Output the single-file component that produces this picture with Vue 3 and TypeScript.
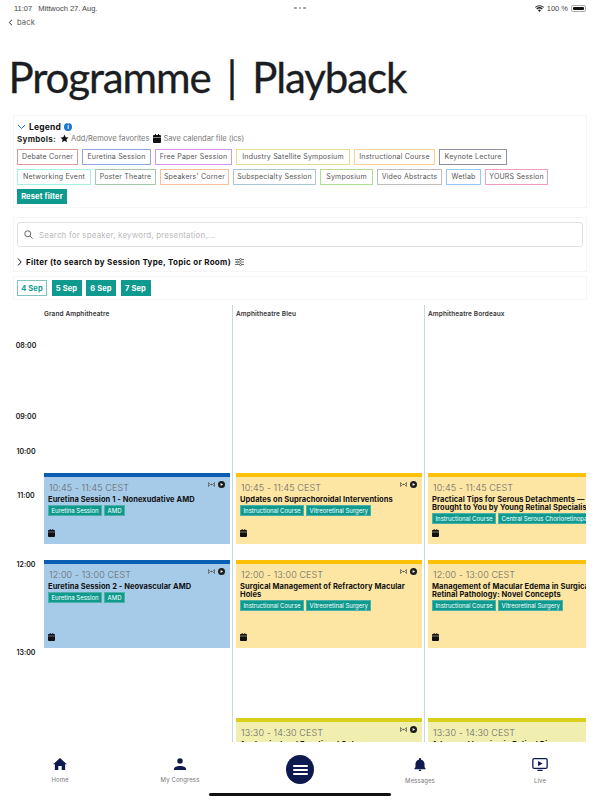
<script setup lang="ts">
interface Chip { label: string; color: string; width: number }
interface Session {
  time: string; title: string; tags: string[]; kind: 'blue' | 'amber' | 'lime'; gap: number; height: number;
}
interface Room { name: string; sessions: Session[] }

const legendRows: Chip[][] = [
  [
    { label: 'Debate Corner', color: '#dc9a98', width: 61 },
    { label: 'Euretina Session', color: '#8fa9dc', width: 69 },
    { label: 'Free Paper Session', color: '#d795e8', width: 77 },
    { label: 'Industry Satellite Symposium', color: '#e4de8e', width: 114 },
    { label: 'Instructional Course', color: '#fbd58e', width: 81 },
    { label: 'Keynote Lecture', color: '#8f8fa3', width: 68 },
  ],
  [
    { label: 'Networking Event', color: '#a5f2de', width: 74 },
    { label: 'Poster Theatre', color: '#a3c9a8', width: 61 },
    { label: "Speakers' Corner", color: '#f6c09b', width: 69 },
    { label: 'Subspecialty Session', color: '#a9c8d4', width: 83 },
    { label: 'Symposium', color: '#b3dd95', width: 53 },
    { label: 'Video Abstracts', color: '#bdbdbd', width: 65 },
    { label: 'Wetlab', color: '#95c8f2', width: 35 },
    { label: 'YOURS Session', color: '#f29cc0', width: 63 },
  ],
]

const days = ['4 Sep', '5 Sep', '6 Sep', '7 Sep']

const hours = [
  { label: '08:00', height: 71 },
  { label: '09:00', height: 35 },
  { label: '10:00', height: 44 },
  { label: '11:00', height: 69 },
  { label: '12:00', height: 88 },
  { label: '13:00', height: 60 },
]

const rooms: Room[] = [
  {
    name: 'Grand Amphitheatre',
    sessions: [
      { time: '10:45 - 11:45 CEST', title: 'Euretina Session 1 - Nonexudative AMD', tags: ['Euretina Session', 'AMD'], kind: 'blue', gap: 152, height: 71 },
      { time: '12:00 - 13:00 CEST', title: 'Euretina Session 2 - Neovascular AMD', tags: ['Euretina Session', 'AMD'], kind: 'blue', gap: 16, height: 88 },
    ],
  },
  {
    name: 'Amphitheatre Bleu',
    sessions: [
      { time: '10:45 - 11:45 CEST', title: 'Updates on Suprachoroidal Interventions', tags: ['Instructional Course', 'Vitreoretinal Surgery'], kind: 'amber', gap: 152, height: 71 },
      { time: '12:00 - 13:00 CEST', title: 'Surgical Management of Refractory Macular Holes', tags: ['Instructional Course', 'Vitreoretinal Surgery'], kind: 'amber', gap: 16, height: 88 },
      { time: '13:30 - 14:30 CEST', title: 'Anatomical and Functional Outcomes', tags: ['Symposium'], kind: 'lime', gap: 70, height: 88 },
    ],
  },
  {
    name: 'Amphitheatre Bordeaux',
    sessions: [
      { time: '10:45 - 11:45 CEST', title: 'Practical Tips for Serous Detachments — Brought to You by Young Retinal Specialists', tags: ['Instructional Course', 'Central Serous Chorioretinopathy'], kind: 'amber', gap: 152, height: 71 },
      { time: '12:00 - 13:00 CEST', title: 'Management of Macular Edema in Surgical Retinal Pathology: Novel Concepts', tags: ['Instructional Course', 'Vitreoretinal Surgery'], kind: 'amber', gap: 16, height: 88 },
      { time: '13:30 - 14:30 CEST', title: 'Advanced Imaging in Retinal Disease', tags: ['Symposium'], kind: 'lime', gap: 70, height: 88 },
    ],
  },
]

const nav = [
  { label: 'Home', icon: 'home' },
  { label: 'My Congress', icon: 'person' },
  { label: '', icon: 'menu' },
  { label: 'Messages', icon: 'bell' },
  { label: 'Live', icon: 'live' },
]
</script>

<template>
  <div class="screen">
    <div class="status">
      <span class="status-left"><span>11:07</span><span>Mittwoch 27. Aug.</span></span>
      <span class="dots"><i></i><i></i><i></i></span>
      <span class="status-right">
        <svg width="9" height="7" viewBox="0 0 18 14"><path d="M9 14 6 10.6a4.4 4.4 0 0 1 6 0ZM4.4 8.9 2.6 6.9a9.6 9.6 0 0 1 12.8 0l-1.8 2a6.9 6.9 0 0 0-9.2 0ZM1.4 5.5 0 3.9a13.4 13.4 0 0 1 18 0l-1.4 1.6a11.3 11.3 0 0 0-15.2 0Z" fill="#222"/></svg>
        <span>100 %</span>
        <span class="battery"><b></b></span>
      </span>
    </div>

    <a class="back">
      <svg width="5" height="7" viewBox="0 0 5 7"><path d="M4 .8 1.2 3.5 4 6.2" fill="none" stroke="#333" stroke-width="1"/></svg>
      <span>back</span>
    </a>

    <h1 class="title">Programme | Playback</h1>

    <section class="panel legend">
      <div class="legend-head">
        <svg width="9" height="6" viewBox="0 0 9 6"><path d="M1 1l3.5 3.5L8 1" fill="none" stroke="#1976d2" stroke-width="1"/></svg>
        <strong>Legend</strong>
        <span class="info">i</span>
      </div>
      <div class="symbols">
        <strong>Symbols:</strong>
        <span class="symbol">
          <svg width="9" height="9" viewBox="0 0 24 24"><path d="M12 1.5l3.2 7 7.6.8-5.7 5.1 1.6 7.6L12 18.2 5.300 22l1.600-7.600L1.200 9.300l7.600-.8Z" fill="#111"/></svg>
          Add/Remove favorites
        </span>
        <span class="symbol">
          <svg width="8" height="9" viewBox="0 0 16 18"><path d="M4 0h2v2h4V0h2v2h2a2 2 0 0 1 2 2v2H0V4a2 2 0 0 1 2-2h2ZM0 7h16v9a2 2 0 0 1-2 2H2a2 2 0 0 1-2-2Z" fill="#111"/></svg>
          Save calendar file (ics)
        </span>
      </div>
      <div v-for="(row, i) in legendRows" :key="i" class="chip-row">
        <span
          v-for="chip in row"
          :key="chip.label"
          class="chip"
          :style="{ borderColor: chip.color, width: chip.width + 'px' }"
        >{{ chip.label }}</span>
      </div>
      <button class="btn reset">Reset filter</button>
    </section>

    <section class="panel search-panel">
      <div class="search">
        <svg width="9" height="9" viewBox="0 0 18 18"><circle cx="7.500" cy="7.500" r="6" fill="none" stroke="#555" stroke-width="1.800"/><path d="M12 12l5 5" stroke="#555" stroke-width="1.800"/></svg>
        <span>Search for speaker, keyword, presentation,...</span>
      </div>
      <div class="filter">
        <svg width="5" height="8" viewBox="0 0 5 8"><path d="M1 .6 4.200 4 1 7.400" fill="none" stroke="#111" stroke-width="1"/></svg>
        <strong>Filter (to search by Session Type, Topic or Room)</strong>
        <svg width="9" height="8" viewBox="0 0 18 16" fill="none" stroke="#333" stroke-width="1.400"><path d="M0 3h9M13 3h5M0 8h3M7 8h11M0 13h9M13 13h5"/><circle cx="11" cy="3" r="2"/><circle cx="5" cy="8" r="2"/><circle cx="11" cy="13" r="2"/></svg>
      </div>
    </section>

    <section class="panel days">
      <button v-for="(d, i) in days" :key="d" class="btn day" :class="{ active: i === 0 }">{{ d }}</button>
    </section>

    <main class="schedule">
      <div class="times">
        <div class="times-head"></div>
        <div v-for="h in hours" :key="h.label" class="hour" :style="{ height: h.height + 'px' }">{{ h.label }}</div>
      </div>
      <div v-for="room in rooms" :key="room.name" class="room">
        <div class="room-name">{{ room.name }}</div>
        <article
          v-for="s in room.sessions"
          :key="s.time"
          class="card"
          :class="s.kind"
          :style="{ marginTop: s.gap + 'px', height: s.height + 'px' }"
        >
          <div class="card-icons">
            <svg width="7" height="5" viewBox="0 0 14 10" fill="none" stroke="#444" stroke-width="1.300"><path d="M1 1v8l4-4ZM13 1v8L9 5Z"/><circle cx="7" cy="5" r=".8" fill="#444"/></svg>
            <svg width="7" height="7" viewBox="0 0 14 14"><circle cx="7" cy="7" r="7" fill="#1a1a1a"/><path d="M5.300 3.800 10.300 7l-5 3.200Z" fill="#fff"/></svg>
          </div>
          <div class="card-time">{{ s.time }}</div>
          <div class="card-title">{{ s.title }}</div>
          <div class="tags"><span v-for="t in s.tags" :key="t" class="tag">{{ t }}</span></div>
          <svg class="card-cal" width="7" height="8" viewBox="0 0 16 18"><path d="M4 0h2v2h4V0h2v2h2a2 2 0 0 1 2 2v2H0V4a2 2 0 0 1 2-2h2ZM0 7h16v9a2 2 0 0 1-2 2H2a2 2 0 0 1-2-2Z" fill="#111"/></svg>
        </article>
      </div>
    </main>

    <nav class="tabbar">
      <div v-for="item in nav" :key="item.icon" class="tab">
        <svg v-if="item.icon === 'home'" width="14" height="12" viewBox="0 0 24 21"><path d="M12 0 24 11h-3v10h-6v-7H9v7H3V11H0Z" fill="#0e1a4f"/></svg>
        <svg v-else-if="item.icon === 'person'" width="12" height="12" viewBox="0 0 24 24"><circle cx="12" cy="6" r="5.500" fill="#0e1a4f"/><path d="M0 24v-2c0-4 5-6 12-6s12 2 12 6v2Z" fill="#0e1a4f"/></svg>
        <svg v-else-if="item.icon === 'bell'" width="12" height="13" viewBox="0 0 20 23"><path d="M10 0a2 2 0 0 1 2 2v1c4 1 6 4 6 8v5l2 3v1H0v-1l2-3v-5c0-4 2-7 6-8V2a2 2 0 0 1 2-2ZM8 21h4v2H8Z" fill="#0e1a4f"/></svg>
        <svg v-else-if="item.icon === 'live'" width="16" height="13" viewBox="0 0 24 20"><rect x="1" y="1" width="22" height="15" rx="2" fill="none" stroke="#0e1a4f" stroke-width="2"/><path d="M9 4.500l7 4-7 4Z" fill="#0e1a4f"/><path d="M8 18h8v2H8Z" fill="#0e1a4f"/></svg>
        <span v-else class="menu-btn"><i></i><i></i><i></i></span>
        <span v-if="item.label" class="tab-label">{{ item.label }}</span>
      </div>
      <div class="home-indicator"></div>
    </nav>
  </div>
</template>

<style>
html, body { margin: 0; background: #fff; }
</style>

<style scoped>
.screen {
  width: 600px; height: 800px; overflow: hidden; display: flex; flex-direction: column;
  background: #fff; color: #222; font-family: Inter, "Liberation Sans", sans-serif; box-sizing: border-box;
}
.status {
  height: 15px; flex: none; display: flex; align-items: center; justify-content: space-between; box-sizing: border-box;
  padding: 1px 14px 0 14px; font-size: 7.500px; color: #444; font-family: "Liberation Sans", sans-serif; position: relative;
}
.status-left { display: flex; gap: 6px; width: 200px; }
.status-right { display: flex; align-items: center; gap: 3px; width: 200px; justify-content: flex-end; }
.dots { display: flex; gap: 2px; }
.dots i { width: 2.500px; height: 2.500px; border-radius: 50%; background: #999; display: block; }
.battery { width: 15px; height: 7px; border: 1px solid #aaa; border-radius: 2px; padding: 1px; box-sizing: border-box; display: flex; }
.battery b { flex: 1; background: #111; border-radius: 1px; }
.back { display: flex; align-items: center; gap: 4px; padding: 2px 0 0 8px; height: 11px; font-size: 7.500px; letter-spacing: .2px; color: #555; flex: none; }
.title {
  margin: 24px 0 0 8.500px; font: 400 42px/50px Lato, sans-serif; letter-spacing: -1.100px; word-spacing: 6.500px; -webkit-text-stroke: .3px #1a1d22; color: #1a1d22; flex: none; height: 50px;
}
.panel { border: 1px solid #f5f5f5; margin: 0 13px; padding: 3px; flex: none; box-sizing: border-box; }
.legend { margin-top: 13px; height: 93px; padding: 5px 3px 0; }
.legend-head { display: flex; align-items: center; gap: 3px; height: 11px; font-size: 8.500px; letter-spacing: .2px; color: #111; }
.info { width: 8px; height: 8px; border-radius: 50%; background: #1976d2; color: #fff; font-size: 6px; font-weight: 700; display: flex; align-items: center; justify-content: center; }
.symbols { display: flex; align-items: center; gap: 4px; height: 12px; margin-top: .500px; font-size: 7.500px; color: #777; }
.symbols strong { color: #222; font-size: 8px; letter-spacing: .3px; }
.symbol { display: flex; align-items: center; gap: 2px; }
.chip-row { display: flex; gap: 4px; margin-top: 4px; }
.chip { border: 1px solid; height: 16px; box-sizing: border-box; display: flex; align-items: center; justify-content: center; font-size: 7px; color: #555; white-space: nowrap; letter-spacing: .2px; }
.btn { border: 0; background: #0f9a90; color: #fff; font: 700 7.500px Inter, sans-serif; letter-spacing: .15px; padding: 0; cursor: pointer; }
.reset { margin-top: 4.500px; width: 50px; height: 15px; display: block; }
.search-panel { margin-top: 9px; height: 55px; padding: 4px 3px 0; }
.search { height: 25px; border: 1px solid #e2e2e2; border-radius: 3px; box-sizing: border-box; display: flex; align-items: center; gap: 6px; padding: 0 6px; font-size: 8px; letter-spacing: .16px; color: #bbb; }
.filter { display: flex; align-items: center; gap: 4px; margin-top: 10px; font-size: 8px; letter-spacing: .3px; color: #111; }
.days { margin-top: 4px; height: 24px; display: flex; gap: 4.500px; align-items: center; }
.day { width: 30px; height: 16px; }
.day.active { background: #fff; color: #0f9a90; border: 1px solid #7fc4bf; box-sizing: border-box; }
.schedule { flex: 1; min-height: 0; margin-top: 5px; width: 586px; overflow: hidden; display: flex; align-items: flex-start; }
.times { width: 44px; flex: none; }
.times-head { height: 36px; }
.hour { width: 52px; font-size: 7px; font-weight: 600; color: #111; text-align: center; }
.room { width: 192px; flex: none; height: 440px; padding: 0 2px 0 3px; border-right: 1px solid #c5dcdc; box-sizing: border-box; overflow: hidden; }
.room:nth-child(2) { width: 189px; padding-left: 0; }
.room:last-child { border-right: 0; }
.room-name { height: 16px; font-size: 6.500px; letter-spacing: .1px; font-weight: 600; color: #333; padding-top: 5px; box-sizing: border-box; }
.card { position: relative; box-sizing: border-box; border-top: 4px solid; padding: 5px 4px 7px; display: flex; flex-direction: column; width: 186px; }
.card.blue { background: #a6cbe9; border-color: #0a5fb4; }
.card.amber { background: #fde6a4; border-color: #ffc107; }
.card.lime { background: #f1efb0; border-color: #d9cf1b; }
.card-icons { position: absolute; top: 4px; right: 5px; display: flex; align-items: center; gap: 3px; }
.card-time { font-size: 9px; letter-spacing: .1px; line-height: 12px; color: #666; padding-left: 1px; font-weight: 300; }
.card-title { font-size: 7.500px; letter-spacing: .07px; line-height: 8.300px; font-weight: 700; color: #111; margin-top: 1.500px; }
.tags { display: flex; gap: 2px; margin-top: 1px; white-space: nowrap; }
.tag { background: #0f9a90; color: #fff; font-size: 6px; height: 11px; line-height: 9px; padding: 0 2.500px; border: 1px solid #4fb0a8; border-width: 1px .500px; box-sizing: border-box; flex: none; }
.card-cal { margin-top: auto; }
.tabbar { flex: none; height: 58px; position: relative; display: grid; grid-template-columns: repeat(5, 120px); background: #fff; }
.tab { display: flex; flex-direction: column; align-items: center; padding-top: 16px; gap: 6px; }
.tab-label { font-size: 6px; letter-spacing: .1px; color: #777; }
.menu-btn { width: 28px; height: 29px; margin-top: -3px; border-radius: 50%; background: #0e1a4f; display: flex; flex-direction: column; align-items: center; justify-content: center; gap: 2px; }
.menu-btn i { width: 15px; height: 2px; background: #fff; border-radius: 1px; display: block; }
.home-indicator { position: absolute; left: 209px; width: 182px; bottom: 4px; height: 3px; border-radius: 2px; background: #111; }
</style>
